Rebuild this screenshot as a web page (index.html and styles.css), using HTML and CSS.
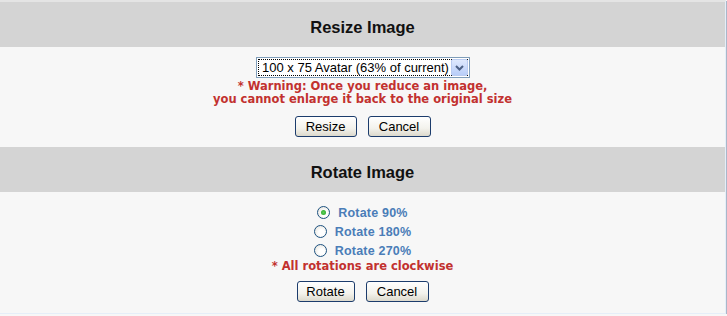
FILE: index.html
```html
<!DOCTYPE html>
<html lang="en">
<head>
  <meta charset="UTF-8" />
  <title>Edit Image</title>
  <link rel="stylesheet" href="styles.css">
</head>
<body>
  <div class="frame">
    <div class="section-title">Resize Image</div>
    <div class="section-body">
      <div class="select-wrap">
        <select class="size-select">
          <option>100 x 75 Avatar (63% of current)</option>
        </select>
        <span class="select-btn">
          <svg width="9" height="6" viewBox="0 0 9 6"><path d="M1 1 L4.5 4.5 L8 1" fill="none" stroke="#4d6185" stroke-width="2"/></svg>
        </span>
      </div>
      <div class="note">* Warning: Once you reduce an image,<br>you cannot enlarge it back to the original size</div>
      <div class="buttons">
        <button class="xp-btn btn-resize">Resize</button>
        <button class="xp-btn btn-cancel">Cancel</button>
      </div>
    </div>

    <div class="section-title">Rotate Image</div>
    <div class="section-body rotate-body">
      <label class="radio-row"><input type="radio" name="rot" checked>Rotate 90%</label>
      <label class="radio-row"><input type="radio" name="rot">Rotate 180%</label>
      <label class="radio-row"><input type="radio" name="rot">Rotate 270%</label>
      <div class="note rotate-note">* All rotations are clockwise</div>
      <div class="buttons rotate-buttons">
        <button class="xp-btn btn-rotate">Rotate</button>
        <button class="xp-btn btn-cancel">Cancel</button>
      </div>
    </div>
  </div>
</body>
</html>
```

FILE: styles.css
```css
body {
  margin: 0;
  background: #f7f7f7;
  font-family: 'Liberation Sans', Arial, sans-serif;
}

.frame {
  width: 725px;
  height: 311px;
  border-top: 2px solid #e4e4e4;
  border-right: 1px solid #e6eef8;
  border-bottom: 1px solid #e6eef8;
  box-shadow: 1px 1px 0 #a9b7c9;
  background: #f7f7f7;
}

.section-title {
  height: 45px;
  background: #d4d4d4;
  display: flex;
  align-items: center;
  justify-content: center;
  font-size: 16.5px;
  font-weight: bold;
  color: #111;
  padding-top: 6px;
  box-sizing: border-box;
}

.section-body {
  height: 100px;
  display: flex;
  flex-direction: column;
  align-items: center;
  padding-top: 10px;
  box-sizing: border-box;
}

.rotate-body {
  height: 119px;
  padding-top: 11px;
}

.select-wrap {
  position: relative;
  width: 214px;
  height: 21px;
  margin-left: 1px;
}

.size-select {
  appearance: none;
  -webkit-appearance: none;
  width: 214px;
  height: 21px;
  border: 1px solid #7f9db9;
  background: #fff;
  font-family: 'Liberation Sans', Arial, sans-serif;
  font-size: 13px;
  color: #000;
  padding: 0 0 0 5px;
  outline: 1px dotted #000;
  outline-offset: -3px;
  border-radius: 0;
}

.select-btn {
  position: absolute;
  right: 2px;
  top: 2px;
  width: 17px;
  height: 17px;
  box-sizing: border-box;
  border: 1px solid #b9cbf0;
  border-radius: 2px;
  background: linear-gradient(#dfe9fd, #b8cdf8);
  display: flex;
  align-items: center;
  justify-content: center;
}

.note {
  color: #c2312f;
  font-family: 'DejaVu Sans', Verdana, sans-serif;
  font-weight: bold;
  font-size: 11.5px;
  line-height: 13px;
  text-align: center;
  margin-top: 2px;
}

.rotate-note {
  margin-top: 0;
}

.buttons {
  display: flex;
  gap: 11px;
  margin-top: 10px;
}

.rotate-buttons {
  margin-top: 8px;
}

.xp-btn {
  height: 21px;
  padding: 0;
  border: 1px solid #1c3c6c;
  border-radius: 3px;
  background: linear-gradient(#ffffff, #f3f2ec 60%, #dcd9cc);
  font-family: 'Liberation Sans', Arial, sans-serif;
  font-size: 13px;
  color: #000;
}

.btn-resize { width: 62px; }
.btn-cancel { width: 63px; }
.btn-rotate { width: 58px; }

.radio-row {
  display: flex;
  align-items: center;
  gap: 8px;
  height: 19px;
  color: #4a7db8;
  font-family: 'Liberation Sans', Arial, sans-serif;
  font-weight: bold;
  font-size: 12.5px;
  letter-spacing: 0.2px;
}

.radio-row input {
  appearance: none;
  -webkit-appearance: none;
  width: 13px;
  height: 13px;
  margin: 0;
  border: 1px solid #1c5180;
  border-radius: 50%;
  background: radial-gradient(circle at 60% 60%, #fff 30%, #e0ded5 100%);
  display: grid;
  place-items: center;
}

.radio-row input:checked::after {
  content: "";
  width: 5px;
  height: 5px;
  border-radius: 50%;
  background: radial-gradient(circle, #5fd05a, #21a121);
}
```
